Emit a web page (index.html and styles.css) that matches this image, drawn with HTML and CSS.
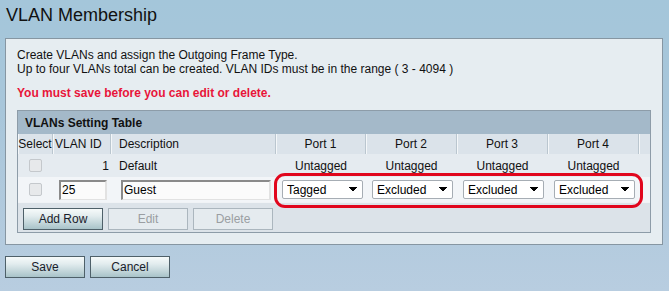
FILE: index.html
```html
<!DOCTYPE html>
<html lang="en">
  <head>
    <meta charset="UTF-8" />
    <meta name="viewport" content="width=device-width, initial-scale=1.0" />
    <title>VLAN Membership</title>
    <link rel="stylesheet" href="styles.css">
  </head>
  <body>
    <h1 class="page-title">VLAN Membership</h1>
    <div class="panel">
      <p class="intro">
        Create VLANs and assign the Outgoing Frame Type.<br />
        Up to four VLANs total can be created. VLAN IDs must be in the range ( 3 - 4094 )
      </p>
      <p class="warn">You must save before you can edit or delete.</p>

      <div class="vlan-table">
        <div class="table-title">VLANs Setting Table</div>
        <table>
          <thead>
            <tr>
              <th class="c-sel">Select</th>
              <th class="c-id">VLAN ID</th>
              <th class="c-desc">Description</th>
              <th class="c-port c-port1">Port 1</th>
              <th class="c-port">Port 2</th>
              <th class="c-port">Port 3</th>
              <th class="c-port">Port 4</th>
              <th class="c-end"></th>
            </tr>
          </thead>
          <tbody>
            <tr class="row-default">
              <td class="cell-sel"><input type="checkbox" class="chk" disabled /></td>
              <td class="id-num">1</td>
              <td class="desc-text">Default</td>
              <td class="port-text">Untagged</td>
              <td class="port-text">Untagged</td>
              <td class="port-text">Untagged</td>
              <td class="port-text">Untagged</td>
              <td></td>
            </tr>
            <tr class="row-new">
              <td class="cell-sel"><input type="checkbox" class="chk" disabled /></td>
              <td><input type="text" class="txt txt-id" value="25" /></td>
              <td><input type="text" class="txt txt-desc" value="Guest" /></td>
              <td class="port-cell">
                <select class="port-select"><option>Tagged</option><option>Untagged</option><option>Excluded</option></select>
              </td>
              <td class="port-cell">
                <select class="port-select"><option>Excluded</option><option>Tagged</option><option>Untagged</option></select>
              </td>
              <td class="port-cell">
                <select class="port-select"><option>Excluded</option><option>Tagged</option><option>Untagged</option></select>
              </td>
              <td class="port-cell">
                <select class="port-select"><option>Excluded</option><option>Tagged</option><option>Untagged</option></select>
              </td>
              <td></td>
            </tr>
          </tbody>
        </table>
        <div class="table-actions">
          <button class="btn">Add Row</button>
          <button class="btn" disabled>Edit</button>
          <button class="btn" disabled>Delete</button>
        </div>
        <div class="callout"></div>
      </div>
    </div>

    <div class="page-actions">
      <button class="btn">Save</button>
      <button class="btn">Cancel</button>
    </div>
  </body>
</html>
```

FILE: styles.css
```css
* {
  box-sizing: border-box;
}
body {
  margin: 0;
  padding: 0 5px;
  height: 291px;
  overflow: hidden;
  font-family: "Liberation Sans", Arial, sans-serif;
  font-size: 12px;
  line-height: 14px;
  color: #111;
  background: linear-gradient(to bottom, #a4c6da 0, #a8c6da 110px, #b8cde0 291px);
}
.page-title {
  margin: 0;
  padding: 4px 0 0 1px;
  font-size: 18px;
  font-weight: normal;
  line-height: 22px;
  color: #111;
}
.panel {
  width: 658px;
  margin-top: 12px;
  padding: 9px 10px 11px 11px;
  border: 1px solid #8696a2;
  background: #e6edf1;
}
.intro {
  margin: 0;
}
.warn {
  margin: 10px 0 0;
  font-weight: bold;
  color: #e8153a;
}
.vlan-table {
  position: relative;
  width: 634px;
  margin-top: 10px;
  border: 1px solid #8d9ca8;
  background: #dce3e9;
}
.table-title {
  height: 23px;
  padding: 5px 0 0 7px;
  font-weight: bold;
  background: #a4b9c9;
}
table {
  width: 100%;
  table-layout: fixed;
  border-spacing: 0;
}
th,
td {
  padding: 0;
  white-space: nowrap;
}
thead th {
  height: 20px;
  font-weight: normal;
  background: #dbe3ea;
  border-right: 1px solid #bac6cf;
  box-shadow: inset 1px 0 0 #f4f7f9;
  text-align: left;
}
thead th.c-end {
  border-right: none;
}
.c-sel {
  width: 35px;
  text-align: center;
}
thead th.c-sel {
  text-align: center;
}
.c-id {
  width: 58px;
}
thead th.c-id {
  padding-left: 2px;
}
.c-desc {
  width: 165px;
}
thead th.c-desc {
  padding-left: 8px;
}
.c-port {
  width: 91px;
}
thead th.c-port {
  text-align: center;
}
.c-port1 {
  width: 90px;
}
.c-end {
  width: 11px;
}
.row-default td {
  height: 23px;
  background: #e5ebf0;
}
.row-new td {
  height: 25px;
  background: #f2f5f8;
}
.cell-sel {
  text-align: center;
}
.chk {
  appearance: none;
  display: block;
  width: 13px;
  height: 13px;
  margin: 0 0 0 11px;
  border: 1px solid #c4c8cc;
  border-radius: 2px;
  background: #e7e9eb;
}
.id-num {
  padding-right: 2px;
  text-align: right;
}
.desc-text {
  padding-left: 8px;
}
.port-text {
  text-align: center;
}
.txt {
  display: block;
  height: 20px;
  padding: 0 1px;
  font: inherit;
  color: #000;
  background: #fbfbfb;
  border-style: solid;
  border-width: 2px 2px 1px 2px;
  border-color: #8a8a8a #e2e2e2 #e2e2e2 #8a8a8a;
  outline: none;
}
.txt-id {
  width: 48px;
  margin-left: 6px;
}
.txt-desc {
  width: 150px;
  margin-left: 10px;
}
.port-cell {
  padding-left: 6px;
}
.port-select {
  appearance: none;
  display: block;
  width: 81px;
  height: 19px;
  padding: 0 0 0 4px;
  font: inherit;
  color: #000;
  border: 1px solid #a6adb4;
  border-radius: 2px;
  background-color: #fff;
  background-image:
    linear-gradient(to top right, transparent 50%, #000 50%),
    linear-gradient(to bottom right, #000 50%, transparent 50%);
  background-repeat: no-repeat;
  background-size: 4px 5px, 4px 5px;
  background-position: 66px 6px, 70px 6px;
}
.table-actions {
  height: 30px;
  padding: 5px 0 0 5px;
  display: flex;
  gap: 5px;
  border-top: 1px solid #f0f3f6;
}
.btn {
  width: 80px;
  height: 22px;
  padding: 0;
  font: inherit;
  color: #18202a;
  border: 1px solid #4e6069;
  background: linear-gradient(to bottom, #f6fafa 0, #e2ecee 35%, #a8c3c9 100%);
}
.btn:disabled {
  color: #9a9ea2;
  border-color: #abb6be;
  background: #e5ebef;
}
.callout {
  position: absolute;
  left: 256px;
  top: 62px;
  width: 369px;
  height: 35px;
  border: 3px solid #e1061d;
  border-radius: 11px;
  pointer-events: none;
}
.page-actions {
  display: flex;
  gap: 5px;
  margin-top: 11px;
}
```
